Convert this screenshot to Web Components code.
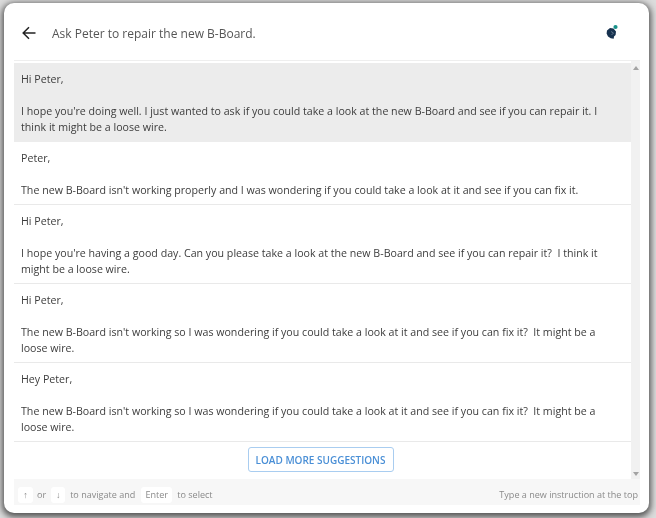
<!DOCTYPE html>
<html>
<head>
<meta charset="utf-8">
<title>Suggestions</title>
<style>
  html, body { margin: 0; height: 100%; }
  body { background: #dcdcdc; font-family: "Open Sans", "Noto Sans", sans-serif; overflow: hidden; }
</style>
</head>
<body>
<suggest-dialog>
  <dialog-header slot="header">Ask Peter to repair the new B-Board.</dialog-header>
  <suggest-row selected>Hi Peter,<br><br>I hope you're doing well. I just wanted to ask if you could take a look at the new B-Board and see if you can repair it. I think it might be a loose wire.</suggest-row>
  <suggest-row>Peter,<br><br>The new B-Board isn't working properly and I was wondering if you could take a look at it and see if you can fix it.</suggest-row>
  <suggest-row>Hi Peter,<br><br>I hope you're having a good day. Can you please take a look at the new B-Board and see if you can repair it?&nbsp; I think it might be a loose wire.</suggest-row>
  <suggest-row>Hi Peter,<br><br>The new B-Board isn't working so I was wondering if you could take a look at it and see if you can fix it?&nbsp; It might be a loose wire.</suggest-row>
  <suggest-row>Hey Peter,<br><br>The new B-Board isn't working so I was wondering if you could take a look at it and see if you can fix it?&nbsp; It might be a loose wire.</suggest-row>
  <load-more slot="more">LOAD MORE SUGGESTIONS</load-more>
  <dialog-footer slot="footer"></dialog-footer>
</suggest-dialog>

<script>
class SuggestDialog extends HTMLElement {
  constructor() {
    super();
    this.attachShadow({ mode: 'open' });
    this.shadowRoot.innerHTML = `
      <style>
        :host {
          display: flex;
          flex-direction: column;
          box-sizing: border-box;
          width: 645px;
          height: 510px;
          margin: 3px 0 0 4px;
          padding: 0 9px 8px 10px;
          background: white;
          border-radius: 10px;
          box-shadow: 0 2px 6px 2px rgba(60, 60, 60, 0.85);
          color: #3a3a3a;
          filter: blur(0.3px);
        }
        .body {
          flex: 1;
          min-height: 0;
          display: flex;
          border-top: 1px solid #eeeeee;
          padding-top: 2px;
        }
        .list { flex: 1; min-width: 0; display: flex; flex-direction: column; }
        .more { display: flex; justify-content: center; padding: 5px 4px 0 0; }
        .scroll {
          flex: none;
          width: 9px;
          background: #f1f1f1;
          display: flex;
          flex-direction: column;
          justify-content: space-between;
          align-items: center;
          padding: 5px 0 3px;
          box-sizing: border-box;
          margin-top: -2px;
        }
        .tri { width: 0; height: 0; border-left: 3px solid transparent; border-right: 3px solid transparent; }
        .up { border-bottom: 4px solid #a3a3a3; }
        .down { border-top: 4px solid #a3a3a3; }
      </style>
      <slot name="header"></slot>
      <div class="body">
        <div class="list">
          <slot></slot>
          <div class="more"><slot name="more"></slot></div>
        </div>
        <div class="scroll"><div class="tri up"></div><div class="tri down"></div></div>
      </div>
      <slot name="footer"></slot>
    `;
  }
}

class DialogHeader extends HTMLElement {
  constructor() {
    super();
    this.attachShadow({ mode: 'open' });
    this.shadowRoot.innerHTML = `
      <style>
        :host {
          display: flex;
          align-items: center;
          box-sizing: border-box;
          height: 57px;
          flex: none;
          padding: 3px 0 0 8px;
          font-size: 12px;
          color: #555555;
        }
        .back { width: 14px; height: 14px; margin-right: 16px; flex: none; }
        .title { flex: 1; }
        .logo { width: 14px; height: 16px; margin-right: 21px; flex: none; margin-top: -2px; }
      </style>
      <svg class="back" viewBox="0 0 14 14" fill="none" stroke="#222" stroke-width="1.5">
        <path d="M13.5 7H1.5M7 1.2 1.2 7 7 12.8"/>
      </svg>
      <span class="title"><slot></slot></span>
      <svg class="logo" viewBox="0 0 14 16">
        <path d="M2 6.5 5 4l3.5.5L11 7.5 10.6 11 9 12.4l-.3 2.4-3-.6L3 12.5 1.6 9.5z" fill="#17324f"/>
        <path d="M6 7.5 8.5 9 6.5 11" fill="none" stroke="#6f8499" stroke-width=".8"/>
        <circle cx="10.5" cy="3" r="2.1" fill="#17918a"/>
      </svg>
    `;
  }
}

class SuggestRow extends HTMLElement {
  constructor() {
    super();
    this.attachShadow({ mode: 'open' });
    this.shadowRoot.innerHTML = `
      <style>
        :host {
          display: block;
          padding: 8px 7px 6px;
          font-size: 10.65px;
          line-height: 16px;
          border-bottom: 1px solid #e9e9e9;
          color: #3c3c3c;
        }
        :host([selected]) { background: #ececec; border-bottom-color: #ececec; }
      </style>
      <slot></slot>
    `;
  }
}

class LoadMore extends HTMLElement {
  constructor() {
    super();
    this.attachShadow({ mode: 'open' });
    this.shadowRoot.innerHTML = `
      <style>
        :host {
          display: block;
          box-sizing: border-box;
          width: 146px;
          height: 25px;
          line-height: 24px;
          text-align: center;
          font-size: 10px;
          font-weight: 600;
          color: #4a8fd6;
          background: white;
          border: 1px solid #a9cdf0;
          border-radius: 3px;
        }
      </style>
      <slot></slot>
    `;
  }
}

class DialogFooter extends HTMLElement {
  constructor() {
    super();
    this.attachShadow({ mode: 'open' });
    this.shadowRoot.innerHTML = `
      <style>
        :host {
          display: flex;
          align-items: center;
          box-sizing: border-box;
          flex: none;
          height: 26px;
          padding: 5px 2px 0 4px;
          background: #f7f7f7;
          font-size: 9.05px;
          color: #8a8a8a;
        }
        .key {
          background: white;
          border-radius: 3px;
          height: 16px;
          line-height: 16px;
          text-align: center;
          margin-right: 4px;
        }
        .up { width: 15px; }
        .down { width: 14px; margin-right: 5px; }
        .enter { width: 31px; margin-right: 5px; }
        .txt { margin-right: 5px; }
        .wide { margin-right: 6px; }
        .end { margin-left: auto; }
      </style>
      <span class="key up">↑</span><span class="txt">or</span>
      <span class="key down">↓</span><span class="txt wide">to navigate and</span>
      <span class="key enter">Enter</span><span class="txt">to select</span>
      <span class="end">Type a new instruction at the top</span>
    `;
  }
}

customElements.define('suggest-dialog', SuggestDialog);
customElements.define('dialog-header', DialogHeader);
customElements.define('suggest-row', SuggestRow);
customElements.define('load-more', LoadMore);
customElements.define('dialog-footer', DialogFooter);
</script>
</body>
</html>
